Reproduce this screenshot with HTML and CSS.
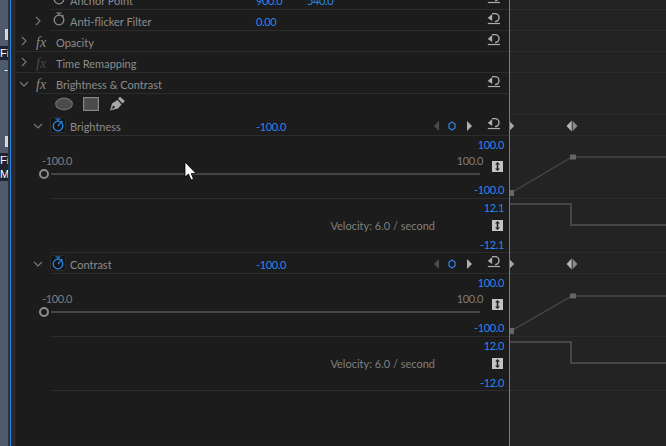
FILE: index.html
```html
<!DOCTYPE html>
<html lang="en">
<head>
<meta charset="utf-8">
<title>Effect Controls</title>
<link rel="stylesheet" href="styles.css">
</head>
<body>
<svg class="sprites" width="0" height="0" aria-hidden="true">
  <defs>
    <symbol id="chev-r" viewBox="0 0 8 10"><path d="M2 1 L6 5 L2 9" fill="none" stroke="currentColor" stroke-width="1.1"/></symbol>
    <symbol id="chev-d" viewBox="0 0 10 8"><path d="M1 2 L5 6 L9 2" fill="none" stroke="currentColor" stroke-width="1.1"/></symbol>
    <symbol id="watch" viewBox="0 0 14 14"><path d="M4.5 1 H9.5 M7 1 V3" fill="none" stroke="currentColor" stroke-width="1.2"/><path d="M10 3 L11.5 4.5" fill="none" stroke="currentColor" stroke-width="1.2"/><circle cx="7" cy="8" r="4.8" fill="none" stroke="currentColor" stroke-width="1.3"/></symbol>
    <symbol id="watch-on" viewBox="0 0 14 14"><path d="M4.5 1 H9.5 M7 1 V3" fill="none" stroke="currentColor" stroke-width="1.2"/><path d="M10 3 L11.5 4.5" fill="none" stroke="currentColor" stroke-width="1.2"/><circle cx="7" cy="8" r="4.8" fill="none" stroke="currentColor" stroke-width="1.3"/><path d="M7 8 L9.5 5" fill="none" stroke="currentColor" stroke-width="1.2"/></symbol>
    <symbol id="reset" viewBox="0 0 14 14"><path d="M5 2.6 H8 A4 4 0 0 1 8 10.6" fill="none" stroke="currentColor" stroke-width="1.4"/><path d="M5.2 3 L.7 7 L5.2 10 Z" fill="currentColor"/><path d="M.8 12.5 H13" stroke="currentColor" stroke-width="1.2"/></symbol>
    <symbol id="updown" viewBox="0 0 11 11"><path d="M5.5 1 L8 3.5 H6.3 V7.5 H8 L5.5 10 L3 7.5 H4.7 V3.5 H3 Z" fill="#222"/></symbol>
    <symbol id="kf" viewBox="0 0 12 12"><path d="M5.7 .5 L.5 6 L5.7 11.5 Z" fill="#b4b4b4"/><path d="M6.6 .8 L11.5 6 L6.6 11.2 Z" fill="#8a8a8a"/></symbol>
    <symbol id="tri-r" viewBox="0 0 6 10"><path d="M0 0 L5 5 L0 10 Z" fill="currentColor"/></symbol>
    <symbol id="tri-l" viewBox="0 0 6 10"><path d="M6 0 L1 5 L6 10 Z" fill="currentColor"/></symbol>
    <symbol id="hex" viewBox="0 0 8 10"><path d="M4 1 L7 3 V7 L4 9 L1 7 V3 Z" fill="none" stroke="currentColor" stroke-width="1.2"/></symbol>
  </defs>
</svg>

<div class="app">
  <aside class="strip">
    <span class="tick tick-a"></span>
    <span class="clip clip-a">Fi</span>
    <span class="clip-dash">-</span>
    <span class="tick tick-b"></span>
    <span class="clip clip-b">Fi</span>
    <span class="clip">M</span>
  </aside>
  <div class="bluebar"></div>
  <div class="gutter"></div>

  <main class="panel">
    <div class="row row-clipped">
      <div class="twist t2"></div>
      <div class="body lined">
        <svg class="ico-watch"><use href="#watch"/></svg>
        <span class="label label-2">Anchor Point</span>
        <span class="value v1">900.0</span>
        <span class="value">540.0</span>
        <svg class="reset"><use href="#reset"/></svg>
      </div>
    </div>
    <div class="row">
      <div class="twist t2"><svg class="chev-r"><use href="#chev-r"/></svg></div>
      <div class="body lined">
        <svg class="ico-watch"><use href="#watch"/></svg>
        <span class="label label-2">Anti-flicker Filter</span>
        <span class="value v1">0.00</span>
        <svg class="reset"><use href="#reset"/></svg>
      </div>
    </div>
    <div class="row lined">
      <div class="twist t1"><svg class="chev-r"><use href="#chev-r"/></svg></div>
      <div class="body">
        <span class="fx">fx</span>
        <span class="label">Opacity</span>
        <svg class="reset"><use href="#reset"/></svg>
      </div>
    </div>
    <div class="row lined">
      <div class="twist t1"><svg class="chev-r"><use href="#chev-r"/></svg></div>
      <div class="body">
        <span class="fx fx-off">fx</span>
        <span class="label">Time Remapping</span>
      </div>
    </div>
    <div class="row">
      <div class="twist t1"><svg class="chev-d"><use href="#chev-d"/></svg></div>
      <div class="body lined">
        <span class="fx">fx</span>
        <span class="label">Brightness &amp; Contrast</span>
        <svg class="reset"><use href="#reset"/></svg>
      </div>
    </div>
    <div class="row">
      <div class="twist t2"></div>
      <div class="body shapes">
        <svg class="shape" width="18" height="14" viewBox="0 0 18 14"><ellipse cx="9" cy="7" rx="8.3" ry="5.8" fill="#4b4b4b" stroke="#6e6e6e" stroke-width="1.2"/></svg>
        <svg class="shape" width="16" height="14" viewBox="0 0 16 14"><rect x=".6" y=".6" width="14.8" height="12.8" fill="#4b4b4b" stroke="#858585" stroke-width="1.2"/></svg>
        <svg class="shape" width="17" height="15" viewBox="0 0 17 15"><path d="M1 14.5 L3 7.5 L8.5 4 L12.5 8.5 L9 12.5 Z M4.5 9.5 L2 13.5 L6.2 11.2 Z" fill="#a8a8a8" fill-rule="evenodd"/><path d="M9 2.8 L11 .8 L15.8 5 L13.6 7.4 Z" fill="#a8a8a8"/></svg>
      </div>
    </div>
    <div class="row">
      <div class="twist t2"><svg class="chev-d"><use href="#chev-d"/></svg></div>
      <div class="body lined">
        <span class="watch-box"><svg class="ico-on"><use href="#watch-on"/></svg></span>
        <span class="label label-2">Brightness</span>
        <span class="value v1">-100.0</span>
        <span class="nav">
          <svg class="nav-dim"><use href="#tri-l"/></svg>
          <svg class="nav-hex"><use href="#hex"/></svg>
          <svg class="nav-on"><use href="#tri-r"/></svg>
        </span>
        <svg class="reset"><use href="#reset"/></svg>
      </div>
    </div>
    <div class="row row-graph">
      <div class="twist t2"></div>
      <div class="body lined graph-body">
        <div class="slider">
          <div class="range"><span>-100.0</span><span>100.0</span></div>
          <div class="track"><span class="knob"></span><span class="rail"></span></div>
        </div>
        <div class="scale scale-value">
          <span class="value">100.0</span>
          <span class="stepper"><svg><use href="#updown"/></svg></span>
          <span class="value">-100.0</span>
        </div>
      </div>
    </div>
    <div class="row row-velocity">
      <div class="twist t2"></div>
      <div class="body lined graph-body">
        <span class="velocity">Velocity: 6.0 / second</span>
        <div class="scale scale-velocity">
          <span class="value">12.1</span>
          <span class="stepper"><svg><use href="#updown"/></svg></span>
          <span class="value">-12.1</span>
        </div>
      </div>
    </div>
    <div class="row">
      <div class="twist t2"><svg class="chev-d"><use href="#chev-d"/></svg></div>
      <div class="body lined">
        <span class="watch-box"><svg class="ico-on"><use href="#watch-on"/></svg></span>
        <span class="label label-2">Contrast</span>
        <span class="value v1">-100.0</span>
        <span class="nav">
          <svg class="nav-dim"><use href="#tri-l"/></svg>
          <svg class="nav-hex"><use href="#hex"/></svg>
          <svg class="nav-on"><use href="#tri-r"/></svg>
        </span>
        <svg class="reset"><use href="#reset"/></svg>
      </div>
    </div>
    <div class="row row-graph">
      <div class="twist t2"></div>
      <div class="body lined graph-body">
        <div class="slider">
          <div class="range"><span>-100.0</span><span>100.0</span></div>
          <div class="track"><span class="knob"></span><span class="rail"></span></div>
        </div>
        <div class="scale scale-value">
          <span class="value">100.0</span>
          <span class="stepper"><svg><use href="#updown"/></svg></span>
          <span class="value">-100.0</span>
        </div>
      </div>
    </div>
    <div class="row row-velocity">
      <div class="twist t2"></div>
      <div class="body lined graph-body">
        <span class="velocity">Velocity: 6.0 / second</span>
        <div class="scale scale-velocity">
          <span class="value">12.0</span>
          <span class="stepper"><svg><use href="#updown"/></svg></span>
          <span class="value">-12.0</span>
        </div>
      </div>
    </div>
  </main>

  <div class="playhead"></div>

  <section class="timeline">
    <div class="tl-row row-clipped"></div>
    <div class="tl-row"></div>
    <div class="tl-row"></div>
    <div class="tl-row"></div>
    <div class="tl-row tl-plain"></div>
    <div class="tl-row"></div>
    <div class="tl-row tl-keys">
      <svg class="kf-start"><use href="#tri-r"/></svg>
      <svg class="kf"><use href="#kf"/></svg>
    </div>
    <div class="tl-row row-graph">
      <svg class="curve" width="156" height="62" viewBox="0 0 156 62"><path class="curve-line" d="M1 57 L62 21 H156"/><rect class="handle" x="0" y="54" width="4" height="6"/><rect class="handle" x="60" y="18.5" width="6" height="5"/></svg>
    </div>
    <div class="tl-row row-velocity">
      <svg class="curve" width="156" height="53" viewBox="0 0 156 53"><path class="curve-step" d="M0 5 H61 V26 H156"/></svg>
    </div>
    <div class="tl-row tl-keys">
      <svg class="kf-start"><use href="#tri-r"/></svg>
      <svg class="kf"><use href="#kf"/></svg>
    </div>
    <div class="tl-row row-graph">
      <svg class="curve" width="156" height="62" viewBox="0 0 156 62"><path class="curve-line" d="M1 57 L62 22 H156"/><rect class="handle" x="0" y="54" width="4" height="6"/><rect class="handle" x="60" y="19.5" width="6" height="5"/></svg>
    </div>
    <div class="tl-row row-velocity">
      <svg class="curve" width="156" height="53" viewBox="0 0 156 53"><path class="curve-step" d="M0 5 H61 V26 H156"/></svg>
    </div>
  </section>

  <svg class="cursor" width="14" height="21" viewBox="0 0 14 21"><path d="M1 1 V16 L4.5 13 L7 19 L9.5 18 L7.2 12.5 H12 Z" fill="#fff" stroke="#000" stroke-width=".8"/></svg>
</div>
</body>
</html>
```
FILE: styles.css
```css
* { box-sizing: border-box; }
html, body { margin: 0; padding: 0; }
body {
  width: 666px;
  height: 446px;
  overflow: hidden;
  background: #1c1c1c;
  font-family: "Lato", "Liberation Sans", sans-serif;
  font-size: 11px;
  color: #8c8c8c;
}
.sprites { position: absolute; }

.app {
  position: relative;
  display: flex;
  width: 666px;
  height: 446px;
  overflow: hidden;
}

/* left neighbouring panel */
.strip {
  flex: 0 0 10px;
  background: linear-gradient(to right, #4f5b6a 0, #4f5b6a 8px, #2e3338 8px, #2e3338 10px);
  display: flex;
  flex-direction: column;
  align-items: flex-start;
  font-size: 11px;
  line-height: 14px;
  color: #fff;
}
.tick { width: 3px; height: 11px; margin-left: 5px; background: #d8d8d8; flex: none; }
.tick-a { margin-top: 29px; }
.tick-b { margin-top: 60px; }
.clip {
  width: 8px;
  height: 14px;
  overflow: hidden;
  background: #1d2430;
  font-family: "Liberation Sans", sans-serif;
  flex: none;
}
.clip-a { margin-top: 6px; }
.clip-b { margin-top: 6px; }
.clip-dash { width: 8px; padding-left: 4px; height: 12px; line-height: 12px; margin-top: 4px; flex: none; }

.bluebar { flex: 0 0 1px; background: #1a7fe6; }
.gutter { flex: 0 0 5px; background: #2a2a2a; border-right: 1px solid #222; }

.panel { flex: 0 0 493px; min-width: 0; background: #1c1c1c; }
.playhead { flex: 0 0 1px; background: #4486cc; }
.timeline { flex: 1; min-width: 0; background: #232323; }

/* rows */
.row { display: flex; height: 21px; }
.row-clipped { margin-top: -11px; }
.row-graph { height: 63px; }
.row-velocity { height: 54px; }
.lined { border-bottom: 1px solid #2c2c2c; }

.twist { flex: none; display: flex; align-items: center; color: #7a7a7a; }
.t1 { width: 20px; padding-left: 3px; }
.t2 { width: 34px; padding-left: 17px; }
.chev-r { width: 8px; height: 10px; margin-left: 1px; }
.chev-d { width: 10px; height: 8px; }

.body {
  flex: 1;
  min-width: 0;
  display: flex;
  align-items: center;
  padding-top: 3px;
  position: relative;
}
.label { color: #8c8c8c; white-space: nowrap; }
.label-2 { width: 186px; flex: none; }
.value { color: #2b86ea; white-space: nowrap; letter-spacing: -.35px; }
.v1 { width: 51px; flex: none; }

.fx {
  flex: none;
  width: 20px;
  font-family: "Liberation Serif", serif;
  font-style: italic;
  font-size: 14px;
  line-height: 14px;
  color: #8a8a8a;
}
.fx-off { color: #4a4a4a; }

.ico-watch { flex: none; width: 14px; height: 14px; margin: 0 4px 5px 2px; color: #8c8c8c; }
.watch-box {
  flex: none;
  width: 16px;
  height: 16px;
  margin-right: 4px;
  margin-bottom: 4px;
  background: #141414;
  border: 1px solid #2a2a2a;
  border-radius: 2px;
  display: flex;
  align-items: center;
  justify-content: center;
  color: #2b86ea;
}
.ico-on { width: 14px; height: 14px; }

.reset { flex: none; width: 14px; height: 14px; margin-left: auto; margin-right: 8px; margin-bottom: 8px; color: #adadad; }
.nav + .reset { margin-left: 14px; }

.nav { margin-left: auto; display: flex; align-items: center; margin-bottom: 2px; }
.nav svg { height: 10px; flex: none; }
.nav-dim { width: 6px; color: #4c4c4c; }
.nav-hex { width: 8px; margin: 0 11px 0 9px; color: #2b86ea; }
.nav-on { width: 6px; color: #b0b0b0; }

.shapes { padding: 0 0 2px 5px; gap: 10px; }
.shape { flex: none; }

/* graphs */
.graph-body { align-items: flex-start; padding: 0; }
.slider { width: 443px; margin: 0 -20px 0 -10px; flex: none; padding-top: 18px; }
.range { display: flex; justify-content: space-between; line-height: 13px; color: #7d7d7d; letter-spacing: -.35px; padding-left: 2px; }
.track { display: flex; align-items: center; height: 12px; margin: 1px 0 0 -1px; }
.knob { flex: none; width: 10px; height: 10px; border: 2px solid #8c8c8c; border-radius: 50%; }
.rail { width: 429px; margin-left: 2px; height: 2px; background: #454545; }

.scale { flex: none; width: 46px; margin-left: auto; display: flex; flex-direction: column; align-items: flex-end; padding: 2px 5px 0 0; line-height: 13px; }
.stepper {
  width: 11px;
  height: 11px;
  margin-right: 1px;
  background: #c4c4c4;
  display: flex;
}
.stepper svg { width: 11px; height: 11px; }
.scale-value .stepper { margin-top: 10px; margin-bottom: 11px; }
.scale-velocity .stepper { margin-top: 6px; margin-bottom: 7px; }

.velocity { width: 385px; flex: none; text-align: right; padding-top: 20px; line-height: 14px; color: #7f7f7f; }

/* timeline */
.tl-row { height: 21px; border-bottom: 1px solid #2b2b2b; }
.tl-row.row-graph { height: 63px; }
.tl-row.row-velocity { height: 54px; }
.tl-row.tl-plain { border-bottom-color: transparent; }
.tl-keys { display: flex; align-items: center; padding-top: 1px; }
.kf-start { width: 5px; height: 10px; color: #a8a8a8; flex: none; }
.kf { width: 12px; height: 12px; margin-left: 51px; flex: none; }

.curve { display: block; }
.curve-line { fill: none; stroke: #474747; stroke-width: 1.4; }
.curve-step { fill: none; stroke: #464646; stroke-width: 2; }
.handle { fill: #666; }

.cursor { position: absolute; left: 184px; top: 161px; }
```
